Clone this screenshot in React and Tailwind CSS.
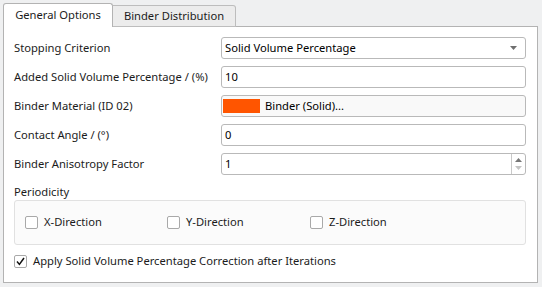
const font = { fontFamily: '"Noto Sans", "Open Sans", sans-serif' }

const TriangleDown = ({ className = '' }) => (
  <svg width="7" height="4" viewBox="0 0 7 4" className={className}>
    <path d="M0 0 H7 L3.5 4 Z" fill="currentColor" />
  </svg>
)

const TriangleUp = ({ className = '' }) => (
  <svg width="7" height="4" viewBox="0 0 7 4" className={className}>
    <path d="M0 4 H7 L3.5 0 Z" fill="currentColor" />
  </svg>
)

const Row = ({ label, children }) => (
  <div className="flex items-center h-[22px]">
    <div className="w-[207px] shrink-0 whitespace-nowrap text-[11.2px] text-[#1b1b1b] leading-none">{label}</div>
    <div className="flex-1 h-full">{children}</div>
  </div>
)

const TextBox = ({ value }) => (
  <div className="h-full w-full bg-white border border-[#b9b9b9] rounded-[3px] flex items-center pl-[3px] text-[11.2px] text-black">
    {value}
  </div>
)

const CheckBox = ({ checked = false, label }) => (
  <div className="flex items-center gap-[6px] text-[11.2px] text-[#1b1b1b] whitespace-nowrap">
    <div className="w-[13px] h-[13px] shrink-0 bg-white border border-[#a9a9a9] rounded-[2px] flex items-center justify-center">
      {checked && (
        <svg width="9" height="9" viewBox="0 0 9 9">
          <path d="M1 4.6 L3.4 7.4 L8 1" stroke="#111" strokeWidth="1.5" fill="none" />
        </svg>
      )}
    </div>
    <span>{label}</span>
  </div>
)

export default function App() {
  return (
    <div className="w-[542px] h-[287px] bg-[#eff0f1] pt-[3px] pl-[3px]" style={font}>
      {/* Tabs */}
      <div className="flex items-end h-[24px]">
        <div className="relative z-10 h-[24px] w-[110px] bg-white border border-[#b3b3b3] border-b-0 rounded-t-[3px] flex items-center justify-center text-[11.2px] text-[#1b1b1b]">
          General Options
        </div>
        <div className="h-[22px] w-[123px] bg-[#ececec] border border-[#bdbdbd] border-l-0 rounded-tr-[3px] flex items-center justify-center text-[11.2px] text-[#1b1b1b]">
          Binder Distribution
        </div>
      </div>

      {/* Panel */}
      <div className="-mt-px w-[535px] h-[257px] bg-white border border-[#b3b3b3] pt-[10px] pl-[10px] pr-[11px]">
        <div className="flex flex-col gap-[7px]">
          <Row label="Stopping Criterion">
            <div className="h-full w-full bg-white border border-[#b9b9b9] rounded-[3px] flex items-center justify-between pl-[3px] pr-[8px] text-[11.2px] text-black">
              <span>Solid Volume Percentage</span>
              <TriangleDown className="text-[#6f6f6f]" />
            </div>
          </Row>
          <Row label="Added Solid Volume Percentage / (%)">
            <TextBox value="10" />
          </Row>
          <Row label="Binder Material (ID 02)">
            <div className="h-full w-full bg-[#f9f9f9] border border-[#b9b9b9] rounded-[3px] flex items-center gap-[5px] pl-[1px] text-[11.2px] text-black">
              <div className="w-[37px] h-[14px] bg-[#ff5500]" />
              <span>Binder (Solid)...</span>
            </div>
          </Row>
          <Row label="Contact Angle / (°)">
            <TextBox value="0" />
          </Row>
          <Row label="Binder Anisotropy Factor">
            <div className="h-full w-full bg-white border border-[#b9b9b9] rounded-[3px] flex text-[11.2px] text-black">
              <div className="flex-1 flex items-center pl-[3px]">1</div>
              <div className="w-[14px] border-l border-[#c9c9c9] flex flex-col items-center justify-center gap-[4px]">
                <TriangleUp className="text-[#777]" />
                <TriangleDown className="text-[#c4c4c4]" />
              </div>
            </div>
          </Row>
        </div>

        <div className="mt-[11px] text-[11.2px] text-[#1b1b1b] leading-none">Periodicity</div>
        <div className="mt-[3px] w-[512px] h-[45px] bg-[#fbfbfb] border border-[#e1e1e1] rounded-[3px] flex items-center pl-[10px]">
          <div className="w-[142px]"><CheckBox label="X-Direction" /></div>
          <div className="w-[143px]"><CheckBox label="Y-Direction" /></div>
          <div className="w-[142px]"><CheckBox label="Z-Direction" /></div>
        </div>

        <div className="mt-[8px]">
          <CheckBox checked label="Apply Solid Volume Percentage Correction after Iterations" />
        </div>
      </div>
    </div>
  )
}
